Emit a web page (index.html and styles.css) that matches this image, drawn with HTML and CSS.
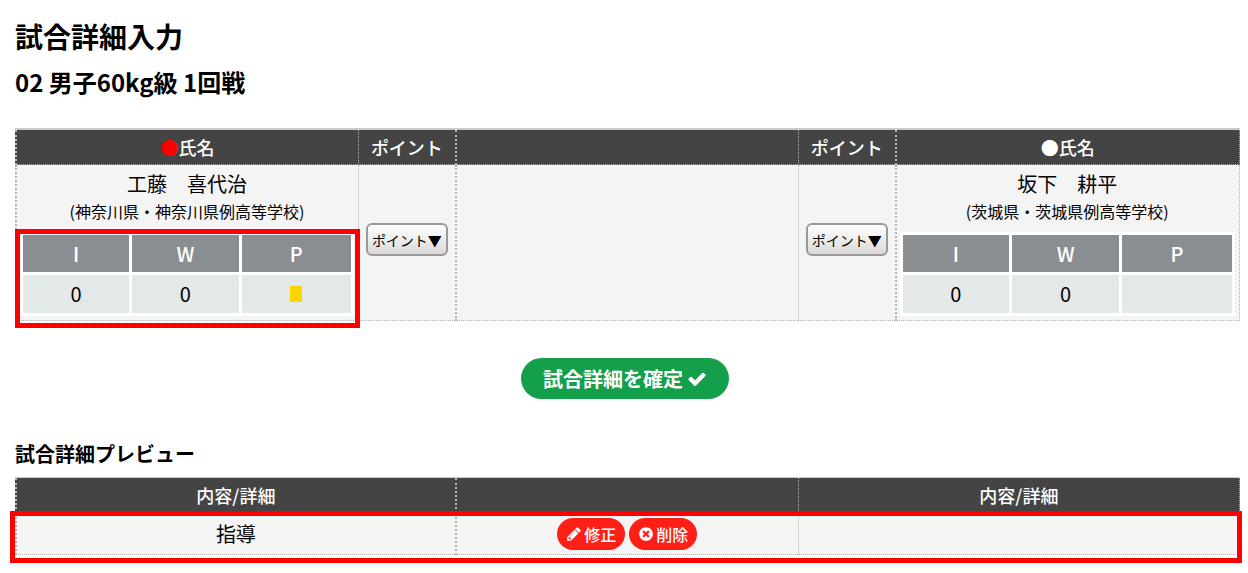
FILE: index.html
```html
<!DOCTYPE html>
<html lang="ja">
<head>
<meta charset="utf-8">
<title>試合詳細入力</title>
<link rel="stylesheet" href="styles.css">
</head>
<body>
<main class="page">
  <h1 class="title">試合詳細入力</h1>
  <h2 class="subtitle">02 男子60kg級 1回戦</h2>

  <table class="grid match">
    <colgroup><col class="wide"><col class="narrow"><col class="wide"><col class="narrow"><col></colgroup>
    <thead>
      <tr>
        <th scope="col"><span class="red">●</span>氏名</th>
        <th scope="col">ポイント</th>
        <th></th>
        <th scope="col">ポイント</th>
        <th scope="col">●氏名</th>
      </tr>
    </thead>
    <tbody>
      <tr>
        <td class="player">
          <p class="name">工藤　喜代治</p>
          <p class="school">(神奈川県・神奈川県例高等学校)</p>
          <div class="score-box marked">
            <table class="score">
              <colgroup><col class="third"><col class="third"><col></colgroup>
              <thead><tr><th scope="col">I</th><th scope="col">W</th><th scope="col">P</th></tr></thead>
              <tbody><tr><td>0</td><td>0</td><td><span class="card"></span></td></tr></tbody>
            </table>
          </div>
        </td>
        <td class="point-cell"><button class="point" type="button">ポイント▼</button></td>
        <td></td>
        <td class="point-cell"><button class="point" type="button">ポイント▼</button></td>
        <td class="player">
          <p class="name">坂下　耕平</p>
          <p class="school">(茨城県・茨城県例高等学校)</p>
          <div class="score-box">
            <table class="score">
              <colgroup><col class="third"><col class="third"><col></colgroup>
              <thead><tr><th scope="col">I</th><th scope="col">W</th><th scope="col">P</th></tr></thead>
              <tbody><tr><td>0</td><td>0</td><td></td></tr></tbody>
            </table>
          </div>
        </td>
      </tr>
    </tbody>
  </table>

  <div class="actions">
    <button class="confirm" type="button">試合詳細を確定
      <svg class="icon" viewBox="0 0 1792 1792" aria-hidden="true"><path d="M1671 566q0 40-28 68l-724 724-136 136q-28 28-68 28t-68-28l-136-136-362-362q-28-28-28-68t28-68l136-136q28-28 68-28t68 28l294 295 656-657q28-28 68-28t68 28l136 136q28 28 28 68z"/></svg>
    </button>
  </div>

  <h3 class="preview-title">試合詳細プレビュー</h3>
  <table class="grid preview">
    <colgroup><col class="side"><col class="wide"><col></colgroup>
    <thead>
      <tr><th scope="col">内容/詳細</th><th></th><th scope="col">内容/詳細</th></tr>
    </thead>
    <tbody>
      <tr class="marked-row">
        <td>指導</td>
        <td>
          <div class="row-actions">
            <button class="pill" type="button"><svg class="icon" viewBox="0 0 1792 1792" aria-hidden="true"><path d="M491 1536l91-91-235-235-91 91v107h128v128h107zm523-928q0-22-22-22-10 0-17 7l-542 542q-7 7-7 17 0 22 22 22 10 0 17-7l542-542q7-7 7-17zm-54-192l416 416-832 832h-416v-416zm683 96q0 53-37 90l-166 166-416-416 166-165q36-38 90-38 53 0 91 38l235 234q37 39 37 91z"/></svg>修正</button>
            <button class="pill" type="button"><svg class="icon" viewBox="0 0 1792 1792" aria-hidden="true"><path d="M1277 1122q0-26-19-45l-181-181 181-181q19-19 19-45 0-27-19-46l-90-90q-19-19-46-19-26 0-45 19l-181 181-181-181q-19-19-45-19-27 0-46 19l-90 90q-19 19-19 46 0 26 19 45l181 181-181 181q-19 19-19 45 0 27 19 46l90 90q19 19 46 19 26 0 45-19l181-181 181 181q19 19 45 19 27 0 46-19l90-90q19-19 19-46zm387-226q0 209-103 385.5t-279.5 279.5-385.5 103-385.5-103-279.5-279.5-103-385.5 103-385.5 279.5-279.5 385.5-103 385.5 103 279.5 279.5 103 385.5z"/></svg>削除</button>
          </div>
        </td>
        <td></td>
      </tr>
    </tbody>
  </table>
</main>
</body>
</html>
```
FILE: styles.css
```css
* { box-sizing: border-box; }

body {
  margin: 0;
  background: #fff;
  color: #000;
  font-family: "Noto Sans CJK JP", sans-serif;
  font-size: 20px;
}

button { font-family: inherit; cursor: pointer; }

.page { padding: 15px 8px 10px 15px; }

.title, .subtitle, .preview-title { margin: 0; font-weight: 700; }
.title { font-size: 28px; line-height: 42px; }
.subtitle { margin: 6px 0 28px; font-size: 24px; line-height: 37px; }
.preview-title { margin-bottom: 8px; font-size: 20px; line-height: 30px; }

.grid {
  width: 100%;
  table-layout: fixed;
  border-collapse: separate;
  border-spacing: 0;
  border-top: 2px solid #ccc;
}
.preview { border-top-width: 1px; }

.wide { width: 28%; }
.narrow { width: 7.9%; }
.side { width: 35.9%; }

.grid > * > tr > th,
.grid > * > tr > td {
  padding: 0;
  text-align: center;
  border: 0 dotted #b4b4b4;
  border-bottom-width: 1px;
  border-left-width: 1px;
}
.grid > * > tr > th {
  height: 35px;
  background: #444;
  color: #fff;
  font-size: 18px;
  font-weight: 500;
  line-height: 26px;
}
.grid > * > tr > td { background: #f4f4f4; }

.match > * > tr > :nth-child(odd),
.preview > * > tr > :nth-child(-n+2) { border-left-width: 2px; }
.grid > * > tr > :last-child { border-right-width: 1px; }

.red { color: #f00; }

.grid > tbody > tr > .player { padding: 4px 4px 4px 3px; vertical-align: top; }
.grid > tbody > tr > .point-cell { padding-bottom: 6px; }
.name, .school { margin: 0; }
.name { line-height: 30px; }
.school { margin-bottom: 9px; font-size: 16px; line-height: 24px; }

.score-box { position: relative; }
.score {
  width: 100%;
  table-layout: fixed;
  border-collapse: separate;
  border-spacing: 3px;
  background: #fff;
}
.third { width: 33%; }
.score th, .score td { padding: 0; text-align: center; line-height: 30px; }
.score th { height: 37px; background: #898e92; color: #fff; font-weight: 500; }
.score td { height: 38px; background: #e3e8e8; }

.card {
  display: block;
  width: 12px;
  height: 16px;
  margin: 0 auto;
  background: #ffd500;
}

/* red frames that draw attention to a region */
.marked::after,
.marked-row td:first-child::after {
  content: "";
  position: absolute;
  border: 5px solid #f00;
  pointer-events: none;
}
.marked::after { inset: -3px -6px -12px -5px; }
.marked-row { position: relative; }
.marked-row td:first-child::after { inset: -2px -2px -8px -5px; }

.point {
  display: block;
  height: 33px;
  margin: 0 auto;
  padding: 0 4px;
  border: 2px solid #999;
  border-radius: 6px;
  background: linear-gradient(#fff, #d9d9d9);
  color: #000;
  font-size: 14px;
  white-space: nowrap;
}

.icon { width: 1em; height: 1em; fill: currentColor; }

.actions { display: flex; justify-content: center; padding: 37px 5px 40px 0; }
.confirm {
  display: flex;
  align-items: center;
  gap: 4px;
  height: 41px;
  padding: 0 22px;
  border: 0;
  border-radius: 21px;
  background: #149f4b;
  color: #fff;
  font-size: 20px;
  font-weight: 700;
}

.row-actions { display: flex; justify-content: center; gap: 4px; padding: 5px 0 4px; }
.pill {
  display: flex;
  align-items: center;
  gap: 2px;
  height: 32px;
  padding: 0 9px;
  border: 0;
  border-radius: 16px;
  background: #ff1f17;
  color: #fff;
  font-size: 16px;
  font-weight: 500;
}
```
